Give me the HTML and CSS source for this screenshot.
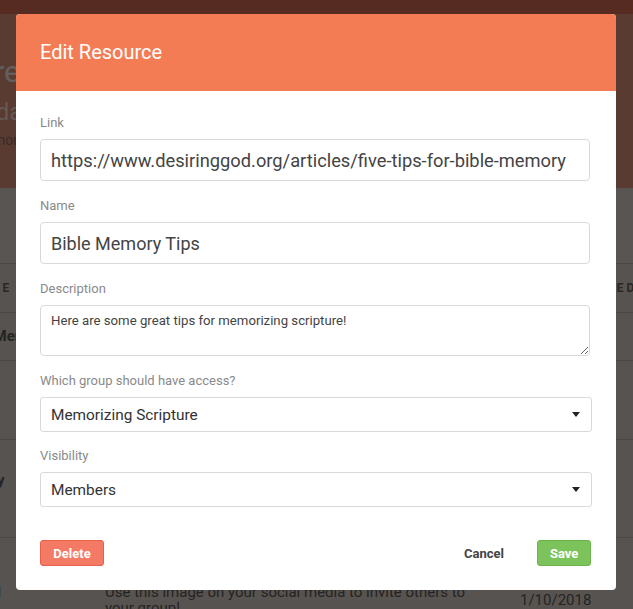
FILE: index.html
```html
<!DOCTYPE html>
<html>
<head>
<meta charset="utf-8">
<title>Edit Resource</title>
<link rel="stylesheet" href="styles.css">
</head>
<body>
<div class="page">
	<div class="topnav"></div>
	<div class="hero">
		<div class="hero_in">
			<h1>Scripture Memorizers</h1>
			<h2>Updated daily</h2>
			<p>A group for memorizing</p>
		</div>
	</div>
	<div class="toolbar"></div>
	<div class="res_table">
		<div class="row head">
			<div class="c1">RESOURCE</div>
			<div class="c2">DESCRIPTION</div>
			<div class="c3">ADDED</div>
		</div>
		<div class="row r1">
			<div class="c1">Scripture Memo</div>
			<div class="c2"></div>
			<div class="c3"></div>
		</div>
		<div class="row r2">
			<div class="c1">Sermon</div>
			<div class="c2"></div>
			<div class="c3"></div>
		</div>
		<div class="row r3">
			<div class="c1">Bible Study<br>Questions</div>
			<div class="c2"></div>
			<div class="c3"></div>
		</div>
		<div class="row r4">
			<div class="c1">Invite Card</div>
			<div class="c2">Use this image on your social media to invite others to your group!</div>
			<div class="c3">1/10/2018</div>
		</div>
	</div>
</div>

<div class="overlay">
	<div class="modal">
		<div class="modal_head"><h3>Edit Resource</h3></div>
		<div class="modal_body">
			<div class="field">
				<label>Link</label>
				<input type="text" class="txt url" value="https://www.desiringgod.org/articles/five-tips-for-bible-memory">
			</div>
			<div class="field">
				<label>Name</label>
				<input type="text" class="txt" value="Bible Memory Tips">
			</div>
			<div class="field">
				<label>Description</label>
				<textarea class="area">Here are some great tips for memorizing scripture!</textarea>
			</div>
			<div class="field field_sel">
				<label>Which group should have access?</label>
				<div class="sel">
					<select><option>Memorizing Scripture</option></select>
					<span class="caret"></span>
				</div>
			</div>
			<div class="field field_sel">
				<label>Visibility</label>
				<div class="sel">
					<select><option>Members</option></select>
					<span class="caret"></span>
				</div>
			</div>
			<div class="actions">
				<button class="btn btn_del">Delete</button>
				<div class="right">
					<button class="btn btn_link">Cancel</button>
					<button class="btn btn_save">Save</button>
				</div>
			</div>
		</div>
	</div>
</div>
</body>
</html>
```

FILE: styles.css
```css
html,body,h1,h2,h3,p{ margin:0; padding:0;}
body{ font-family:Roboto,"Liberation Sans",sans-serif; background:#dad0c8; overflow:hidden; height:609px;}

/* page behind the modal */
.topnav{ height:14px; background:#d46c55;}
.hero{ height:174px; background:#e1947a; overflow:hidden;}
.hero_in{ margin-left:-100px; padding-top:40px;}
.hero h1{ font-size:30px; font-weight:400; color:#f5f0ee; line-height:36px;}
.hero h2{ font-size:24px; font-weight:400; color:#f4ddd3; margin-top:8px;}
.hero p{ font-size:14px; color:#8f6a5e; margin-top:6px;}
.toolbar{ height:75px; background:#dcd4ce; border-bottom:1px solid #b9b1ab;}
.res_table{ margin-left:-84px; width:780px;}
.row{ display:grid; grid-template-columns:177px 415px 188px; border-bottom:1px solid #b9b1ab; align-items:center;}
.row div{ padding:0 12px; color:#5e5955; font-size:15px;}
.row .c1{ font-weight:700; line-height:17px;}
.row.head{ height:48px;}
.row.head div{ font-size:12px; font-weight:700; letter-spacing:3px; color:#6a625e;}
.row.head .c3{ padding-left:76px;}
.r1{ height:47px;}
.r2{ height:78px;}
.r3{ height:97px;}
.r4{ height:80px; align-items:start; padding-top:46px;}
.r4 .c2{ line-height:16px;}
.r4 div.c3{ margin-top:7px;}

/* modal */
.overlay{ position:fixed; left:0; top:0; right:0; bottom:0; background:rgba(0,0,0,.6);}
.modal{ width:600px; margin:14px 0 0 16px; background:#fff; border-radius:4px; overflow:hidden;}
.modal_head{ background:#f47c55; padding:24px 24px;}
.modal_head h3{ color:#fff; font-size:20px; font-weight:400; line-height:29px;}
.modal_body{ padding:24px 24px 24px;}
.field{ margin-bottom:17px;}
.field_sel{ margin-bottom:16px;}
.field label{ display:block; font-size:13px; line-height:16px; color:#8a8a8a; margin-bottom:8px;}
.txt{ display:block; box-sizing:border-box; width:550px; height:42px; border:1px solid #d9d9d9; border-radius:4px; padding:0 10px; font-family:Roboto,"Liberation Sans",sans-serif; font-size:18px; color:#444; outline:none;}
.txt.url{ font-size:18.3px;}
.area{ display:block; box-sizing:border-box; width:550px; height:51px; border:1px solid #d9d9d9; border-radius:4px; padding:7px 10px; font-family:Roboto,"Liberation Sans",sans-serif; font-size:13.2px; color:#444; outline:none;}
.sel{ position:relative; width:552px;}
.sel select{ display:block; box-sizing:border-box; width:552px; height:35px; -webkit-appearance:none; appearance:none; background:#fff; border:1px solid #d9d9d9; border-radius:3px; padding:0 10px; font-family:Roboto,"Liberation Sans",sans-serif; font-size:15.4px; color:#333; outline:none;}
.caret{ position:absolute; right:12px; top:15px; width:0; height:0; border-left:4px solid transparent; border-right:4px solid transparent; border-top:5px solid #222;}
.actions{ display:flex; justify-content:space-between; align-items:center; margin-top:33px;}
.right{ display:flex; align-items:center; gap:21px;}
.btn{ font-family:Roboto,"Liberation Sans",sans-serif; font-size:13px; font-weight:700; height:26px; border-radius:3px; padding:0 12px; cursor:pointer;}
.btn_del{ background:#f47a66; border:1px solid #e6604c; color:#fff; width:64px;}
.btn_link{ background:none; border:none; color:#444; padding:0 12px;}
.btn_save{ background:#7dc35b; border:1px solid #6cb24b; color:#fff; width:54px; margin-right:1px;}
```
